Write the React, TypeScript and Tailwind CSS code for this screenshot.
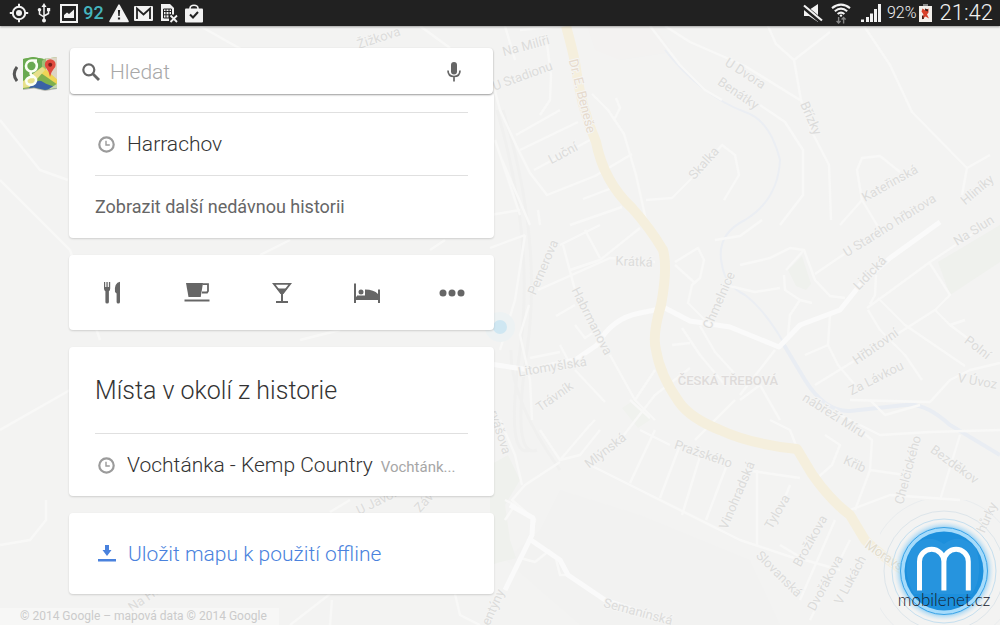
import React from "react";

type Label = { text: string; x: number; y: number; r: number; anchor?: "start" | "middle" | "end"; fill?: string; size?: number; weight?: number };

const labels: Label[] = [
  { text: "Na Milíři", x: 527, y: 50, r: -15 },
  { text: "U Stadionu", x: 524, y: 80, r: -20 },
  { text: "Dr. E. Beneše", x: 578, y: 97, r: 76, fill: "#e6dacd" },
  { text: "Luční", x: 565, y: 157, r: -28 },
  { text: "Skalka", x: 707, y: 166, r: -48 },
  { text: "U Dvora", x: 743, y: 77, r: 33 },
  { text: "Benátky", x: 736, y: 97, r: 34 },
  { text: "Břízky", x: 807, y: 120, r: 66 },
  { text: "Kateřinská", x: 892, y: 187, r: -29 },
  { text: "U Starého hřbitova", x: 892, y: 229, r: -32 },
  { text: "Hliníky", x: 980, y: 193, r: -40 },
  { text: "Na Slun", x: 957, y: 246, r: -32, anchor: "start" },
  { text: "Pernerova", x: 547, y: 269, r: -67 },
  { text: "Krátká", x: 634, y: 266, r: 2 },
  { text: "Habrmanova", x: 588, y: 323, r: 63 },
  { text: "Litomyšlská", x: 553, y: 371, r: -9 },
  { text: "Trávník", x: 557, y: 400, r: -35 },
  { text: "ČESKÁ TŘEBOVÁ", x: 728, y: 385, r: 0, weight: 500, fill: "#dedbda" },
  { text: "Chmelnice", x: 723, y: 302, r: -66 },
  { text: "Lidická", x: 873, y: 276, r: -46 },
  { text: "Hřbitovní", x: 878, y: 350, r: -35 },
  { text: "Za Lávkou", x: 878, y: 382, r: -27 },
  { text: "Polní", x: 975, y: 351, r: 38 },
  { text: "V Úvoz", x: 957, y: 382, r: 10, anchor: "start" },
  { text: "nábřeží Míru", x: 832, y: 419, r: 32 },
  { text: "Mlýnská", x: 608, y: 454, r: -38 },
  { text: "Pražského", x: 702, y: 458, r: 19 },
  { text: "Vinohradská", x: 741, y: 497, r: -67 },
  { text: "Tylova", x: 781, y: 514, r: -60 },
  { text: "Brožíkova", x: 814, y: 543, r: -61 },
  { text: "Slovanská", x: 776, y: 577, r: 45 },
  { text: "Dvořákova", x: 829, y: 585, r: -62 },
  { text: "V Lukách", x: 854, y: 582, r: -62 },
  { text: "Křib", x: 853, y: 468, r: 24 },
  { text: "Chelčického", x: 912, y: 471, r: -75 },
  { text: "Bezděkov", x: 952, y: 468, r: 36 },
  { text: "Moravská", x: 864, y: 547, r: 34, anchor: "start", fill: "#e2dccb" },
  { text: "hůrky", x: 991, y: 519, r: -66 },
  { text: "Semanínská", x: 637, y: 616, r: 15 },
  { text: "rvášova", x: 503, y: 455, r: 72, anchor: "end" },
  { text: "entýny", x: 497, y: 609, r: -66 },
  { text: "Na Horách", x: 132, y: 612, r: -34, anchor: "start" },
  { text: "U Javorky", x: 359, y: 515, r: -26, anchor: "start" },
  { text: "Závodu", x: 420, y: 513, r: -48, anchor: "start" },
  { text: "Žižkova", x: 380, y: 42, r: -18 },
];

const streets = [
  "M490 72 L500 110 L516 145 L530 173 L547 195 L595 176 L632 154",
  "M547 44 L551 75 L550 100 L540 115",
  "M516 135 L560 110 M520 150 L578 122 M534 170 L590 140 M583 199 L612 188 M570 225 L622 207",
  "M592 94 L608 110 L624 134 L636 175 L646 220 M614 120 L620 108 L616 98",
  "M646 200 L672 198 L700 170 L722 145 L735 155 L739 175 L724 200",
  "M650 26 L680 65 L705 90 L722 100",
  "M665 26 L690 42 L745 66 L800 100",
  "M768 26 L776 44 L794 60 L830 32 M794 60 L801 100 L811 130 L829 165 L831 220",
  "M760 105 L785 122 L803 150 L803 195 L780 225",
  "M864 26 L890 65 L912 112 L967 168 L962 195 M967 168 L990 155",
  "M862 200 L857 170 L862 158 L880 156 L900 172 M840 225 L862 200 L880 230",
  "M560 245 L600 225 M570 270 L600 260 L640 228 M585 230 L600 258",
  "M538 290 L610 258 L655 262 M563 245 L575 290 M490 248 L525 235",
  "M525 235 L515 300 L500 350 M529 305 L520 335 L530 380 L532 420",
  "M556 316 L575 305 M575 325 L585 338 L600 328 M530 358 L560 352",
  "M610 355 L635 400 L655 420 M575 370 L605 402 M635 400 L655 370 M560 345 L568 360",
  "M675 262 L698 248 L704 260 L700 278 L692 285 L688 303 L710 325 M675 265 L695 283",
  "M672 345 L690 343 M682 328 L700 355 L725 385 M700 326 L715 352 L735 374",
  "M715 240 L740 236 L762 220 M725 285 L755 292 L780 288",
  "M740 265 L770 258 L790 248 L804 250 L815 280 L830 296 L845 298",
  "M784 275 L785 290 L800 300 L812 303 M804 250 L786 270 M800 300 L790 315 L788 335",
  "M815 274 L850 250 M870 304 L875 295 L876 275 M867 308 L885 295 L930 262 L975 232",
  "M929 262 L950 295 L935 310 L880 345 L815 385 M878 298 L905 325 L965 366",
  "M830 315 L828 345 L838 365 L855 385 M868 310 L880 330 L905 355 L922 380",
  "M805 355 L828 345 M935 310 L950 325 L970 340 M950 325 L965 320",
  "M850 400 L930 402 L950 380 L970 370 L1000 363",
  "M740 395 L775 350 M740 400 L760 385 L780 420 M695 440 L735 400",
  "M620 440 L655 395 L690 368 M630 400 L650 418",
  "M540 430 L560 460 L590 425 L595 420 M560 460 L580 455 L600 430",
  "M590 465 L640 490 L740 540 L800 560 M655 430 L630 483 M680 445 L660 498 M702 450 L682 515 M728 462 L706 520",
  "M640 430 L660 440 L670 445 M560 462 L525 485 L512 500 L535 520 L530 540 L505 590",
  "M500 420 L515 455 L522 485 M505 520 L515 505 L505 500",
  "M757 470 L757 545 M745 470 L800 478 M790 485 L780 510 M797 448 L790 430 L770 420",
  "M815 480 L832 465 L840 445 L825 435 M860 430 L872 440 L870 470 L855 510",
  "M850 510 L890 495 L960 500 M870 470 L905 475 M960 435 L940 500",
  "M780 545 L805 560 L840 570 M835 520 L800 600 M850 540 L810 620",
  "M555 555 L560 575 L570 575 M520 558 L535 562 L550 550",
  "M840 415 L880 435 L930 432 L1000 430 M870 400 L885 415 L920 405",
  "M46 500 L46 520 L30 540 L0 545 M100 340 L70 250 L0 180 M290 240 L260 255 M430 250 L445 240",
  "M330 512 L350 500 M330 594 L290 625 M332 600 L330 625 M455 594 L460 615 L480 625",
  "M200 26 L260 60 M420 26 L450 48 M0 120 L40 170 L68 180 M0 430 L70 390 M300 340 L340 330",
  "M560 26 L520 30 M505 26 L515 60 M495 140 L520 215 M490 215 L520 210 M502 160 L530 225 M538 210 L540 225",
];

function MapCanvas() {
  return (
    <svg className="absolute inset-0 h-full w-full" viewBox="0 0 1000 625" preserveAspectRatio="xMidYMid slice" aria-hidden="true">
      <rect width="1000" height="625" fill="#f3f3f2" />
      <path d="M587 26 L655 26 L672 52 L620 60 L595 50Z" fill="#f3f2f1" />
      <path d="M505 560 L540 530 L560 490 L640 515 L750 560 L780 625 L580 625Z" fill="#f2f2f1" />
      <path d="M938 262 L1000 225 L1000 262 L950 295Z" fill="#eff1ed" />
      <path d="M788 270 L802 256 L811 284 L806 290 L796 286Z" fill="#eff1ed" />
      <path d="M490 465 L508 455 L520 480 L505 505 L510 540 L516 558 L490 565Z" fill="#eff1ed" />
      <path d="M622 408 L634 400 L650 420 L638 428Z" fill="#f0f2ee" />
      <path d="M497 110 Q535 240 520 350 T530 450 M503 110 Q543 240 527 350 T537 450 M511 350 Q510 400 560 470" fill="none" stroke="#f0f0ef" strokeWidth="3" />
      <path d="M665 50 Q700 95 745 112 Q770 120 780 160 Q778 200 745 220 Q715 235 722 265 Q725 285 745 295 Q765 310 785 345" fill="none" stroke="#ebeef3" strokeWidth="2" />
      <path d="M784 345 L805 380 Q825 412 850 411 L905 405 Q925 402 950 425 L1000 455" fill="none" stroke="#e9edf3" strokeWidth="4" />
      {streets.map((d) => (
        <path key={d} d={d} fill="none" stroke="#f8f8f7" strokeWidth="2.4" strokeLinejoin="round" />
      ))}
      <path
        d="M490 364 L530 370 L575 360 L597 345 Q612 318 640 313 L665 308 L690 321 L730 327 L779 347 L800 325 L840 310 L860 285 L890 258 L940 222 M510 505 L533 518 L532 535 L505 590 M528 538 L560 560 L568 575 L605 600 L670 622"
        fill="none"
        stroke="#fafafa"
        strokeWidth="5"
        strokeLinejoin="round"
      />
      <path
        d="M566 26 Q572 48 575 62 Q580 105 596 142 Q604 182 632 208 Q650 228 663 250 Q668 268 661 305 Q652 335 656 350 Q660 375 679 402 Q690 418 720 430 Q750 444 797 449 L812 474 Q830 500 850 515 L865 540 Q880 555 910 575"
        fill="none"
        stroke="#f5efdd"
        strokeWidth="10"
        strokeLinejoin="round"
      />
      <circle cx="500" cy="327" r="15" fill="#edf2f3" />
      <circle cx="500" cy="327" r="7" fill="#cfe7f2" />
      {labels.map((l) => (
        <text
          key={l.text}
          x={l.x}
          y={l.y}
          transform={`rotate(${l.r} ${l.x} ${l.y})`}
          textAnchor={l.anchor ?? "middle"}
          fill={l.fill ?? "#dcdcdb"}
          stroke="#f5f5f4"
          strokeWidth="2"
          paintOrder="stroke"
          fontSize={l.size ?? 13}
          fontWeight={l.weight ?? 400}
        >
          {l.text}
        </text>
      ))}
    </svg>
  );
}

function IconSlot({ children }: { children: React.ReactNode }) {
  return <span className="flex w-[25px] justify-center">{children}</span>;
}

function StatusBar() {
  return (
    <header className="relative flex h-[26px] items-center bg-[#212121] pr-[7px] pl-1.5 text-[#f2f2f2] shadow-[0_1px_2px_rgba(0,0,0,0.35)]">
      <IconSlot>
        <svg width="20" height="20" viewBox="0 0 20 20" fill="none" stroke="currentColor" strokeWidth="2">
          <circle cx="10" cy="10" r="6.2" />
          <circle cx="10" cy="10" r="3" fill="currentColor" stroke="none" />
          <path d="M10 .8v3.4M10 15.8v3.4M.8 10h3.4M15.8 10h3.4" />
        </svg>
      </IconSlot>
      <IconSlot>
        <svg width="14" height="20" viewBox="0 0 14 20" fill="none" stroke="currentColor" strokeWidth="1.5">
          <path d="M7 3v14M7 14 L2.5 11V7M7 13 L11.5 10.5V7" />
          <path d="M7 0 L9.5 4h-5Z" fill="currentColor" stroke="none" />
          <circle cx="7" cy="17.4" r="2" fill="currentColor" stroke="none" />
          <circle cx="2.5" cy="6.8" r="1.8" fill="currentColor" stroke="none" />
          <rect x="10" y="5" width="3.2" height="3.2" fill="currentColor" stroke="none" />
        </svg>
      </IconSlot>
      <IconSlot>
        <svg width="18" height="19" viewBox="0 0 18 19">
          <rect x="1" y="1" width="16" height="17" fill="none" stroke="currentColor" strokeWidth="2" />
          <path d="M4 14v-3l3-2.5 2 1.5 5-4.5V14Z" fill="currentColor" />
        </svg>
      </IconSlot>
      <IconSlot>
        <span className="text-lg leading-5 font-medium text-[#45b4bd]">92</span>
      </IconSlot>
      <IconSlot>
        <svg width="20" height="19" viewBox="0 0 20 19">
          <path d="M10 1.2 L19 17.5H1Z" fill="currentColor" stroke="currentColor" strokeWidth="1.6" strokeLinejoin="round" />
          <path d="M8.9 6h2.2l-.4 6h-1.4ZM8.9 13.4h2.2v2.2H8.9Z" fill="#212121" />
        </svg>
      </IconSlot>
      <IconSlot>
        <svg width="19" height="15" viewBox="0 0 19 15">
          <rect width="19" height="15" rx="1" fill="currentColor" />
          <path d="M3 13V2.5 L9.5 8.5 L16 2.5V13" fill="none" stroke="#212121" strokeWidth="1.8" />
        </svg>
      </IconSlot>
      <IconSlot>
        <svg width="18" height="20" viewBox="0 0 18 20">
          <path d="M1 1h9l4 4v8l-4 5H1Z" fill="currentColor" />
          <path d="M3.5 6h8v9h-8ZM3.5 8.5h8M3.5 11.8h8M6 6v9M9 6v9" fill="none" stroke="#212121" />
          <path d="M9 11.5h9V20H9Z" fill="#212121" />
          <path d="M10.5 12.5l6.5 6.5M17 12.5l-6.5 6.5" stroke="currentColor" strokeWidth="1.8" />
        </svg>
      </IconSlot>
      <IconSlot>
        <svg width="18" height="19" viewBox="0 0 18 19">
          <path d="M5 5.5 V4.2 Q5.3 1.3 9 1.3 T13 4.2 V5.5" fill="none" stroke="currentColor" strokeWidth="1.6" />
          <rect y="4.5" width="18" height="14" rx="1" fill="currentColor" />
          <path d="M5 10.5l3 3 5-5.5" fill="none" stroke="#212121" strokeWidth="2" />
        </svg>
      </IconSlot>

      <div className="ml-auto flex items-center">
        <svg className="mr-2" width="20" height="18" viewBox="0 0 20 18">
          <path d="M1 6h5l9-6v18l-9-6H1Z" fill="currentColor" />
          <path d="M0 2 L18 17" stroke="#212121" strokeWidth="5" />
          <path d="M1 1.5 L19 16.5" stroke="currentColor" strokeWidth="2.2" />
        </svg>
        <svg className="mr-2.5" width="20" height="21" viewBox="0 0 20 21" fill="none" stroke="currentColor" strokeWidth="2.1">
          <path d="M1 5.2Q10-1.8 19 5.2M3.8 8.2Q10 3.2 16.2 8.2M6.600 11Q10 8.200 13.400 11" />
          <circle cx="10" cy="12.6" r="1.2" fill="currentColor" stroke="none" />
          <path d="M7.600 14v6M5.600 18l2 2 2-2M12.600 20.500v-6M10.600 16.500l2-2 2 2" stroke="#858585" strokeWidth="1.4" />
        </svg>
        <svg className="mr-1.5" width="20" height="18" viewBox="0 0 20 18" fill="currentColor">
          <path d="M0 15.5h3V18H0ZM5 13h3v5H5ZM9 9.5h3V18H9ZM13 5h3v13h-3ZM17 0h3v18h-3Z" />
        </svg>
        <span className="mr-0.5 text-base leading-5 font-light">92%</span>
        <svg className="mr-2" width="13" height="18" viewBox="0 0 13 18">
          <path d="M4 0h5v2H4Z" fill="#8a8a8a" />
          <rect y="2" width="13" height="16" fill="#f3efeb" />
          <path d="M3.5 4.5l3 2 3-2v4l-1.5 2 2 4-3.500-2-3.500 3 1.500-5-2-3Z" fill="#d9412b" />
          <path d="M6 4.500l3 1v2l-3-1ZM3 12l1-1 1 4H3Z" fill="#44201b" />
        </svg>
        <time className="text-[22px] leading-6 font-light">21:42</time>
      </div>
    </header>
  );
}

function MapsLogo() {
  return (
    <svg width="36" height="35" viewBox="0 0 36 35">
      <defs>
        <clipPath id="sheet">
          <path d="M1 3 L11 1 L22 3 L35 1 V32 L23 34 L12 31.5 L1 33Z" />
        </clipPath>
      </defs>
      <path d="M1 4 L11 2 L22 4 L35 2 V33 L23 35 L12 32.5 L1 34Z" fill="#b9b9b5" />
      <g clipPath="url(#sheet)">
        <rect width="36" height="35" fill="#7fb04d" />
        <path d="M11 0 L22 0 L19 14 L10 24 L0 24 L0 0Z" fill="#6aaa52" />
        <path d="M20 14 L23 0 L36 0 L36 25Z" fill="#ddd5c5" />
        <path d="M20 5 L24 1 L24 14 L20 14Z" fill="#9cc078" />
        <path d="M16 15 L21 11 L36 24 L36 29Z" fill="#eed556" />
        <path d="M0 26 L20 11 L23 14 L8 31 L0 32Z" fill="#e7e08a" />
        <path d="M7 32 Q15 22 21 26 T36 31 V35 H7Z" fill="#3a61a6" />
        <path d="M24 35 L36 27 V35Z" fill="#c9d9ae" />
      </g>
      <path d="M15 4.5 H9.5 A5.5 5.5 0 1 0 9.5 15.5 A5.5 5.5 0 0 0 12 5.200 M9.500 15.500 Q7 18 11 20 Q16 23 13 27 Q9 30.500 5 27.500 Q2.500 23 8 21 L12 20.800" fill="none" stroke="#fbfff5" strokeWidth="2.6" />
      <path d="M28 21 Q27.500 16 24.500 12.500 A5.400 5.400 0 1 1 32 12.500 Q28.800 16 28 21Z" fill="#e04b3e" />
      <circle cx="28.2" cy="8.7" r="2" fill="#791f1a" />
    </svg>
  );
}

function Clock() {
  return (
    <svg className="shrink-0" width="17" height="17" viewBox="0 0 17 17" fill="none" stroke="#9b9b9b">
      <circle cx="8.5" cy="8.5" r="7.2" strokeWidth="2.2" />
      <path d="M8 4.8V9h3.8" strokeWidth="1.4" />
    </svg>
  );
}

const categories = [
  {
    name: "Restaurace",
    icon: (
      <svg width="18" height="23" viewBox="0 0 18 23" fill="#666">
        <path d="M1 1h1.2v5h1.2V1h1.3v5h1.2V1H7.2v6.5Q7.2 9.5 5.9 10.3V21q0 1.5-1.8 1.5T2.4 21V10.3Q1 9.500 1 7.500ZM17 .8V21q0 1.500-1.700 1.500T13.600 21V12.500L12 11Q11 2 17 .8Z" />
      </svg>
    ),
  },
  {
    name: "Kavárny",
    icon: (
      <svg width="26" height="21" viewBox="0 0 26 21">
        <path d="M2 1h17l-2.300 14H4.500Z" fill="#666" />
        <path d="M18.500 2.200H24V9l-1 1.500h-5" fill="none" stroke="#666" strokeWidth="1.800" />
        <path d="M.5 17.500H25.500v2H.5Z" fill="#666" />
      </svg>
    ),
  },
  {
    name: "Bary",
    icon: (
      <svg width="20" height="22" viewBox="0 0 20 22">
        <path d="M1.800 1.900H18.200L11 11H9Z" fill="none" stroke="#666" strokeWidth="1.800" />
        <path d="M4.500 6.500h11L11 12V19h5v2H4v-2h5v-7Z" fill="#666" />
      </svg>
    ),
  },
  {
    name: "Hotely",
    icon: (
      <svg width="28" height="22" viewBox="0 0 28 22" fill="#666">
        <path d="M1 1.500h2v13h22V7.500h2V21h-2v-3H3v3H1Z" />
        <circle cx="8" cy="10" r="2.500" />
        <path d="M12 7.500Q21 7.500 25 12v3H4v-1.500h8Z" />
      </svg>
    ),
  },
  {
    name: "Další",
    icon: (
      <svg width="26" height="8" viewBox="0 0 26 8" fill="#666">
        <circle cx="4" cy="4" r="3.500" />
        <circle cx="13" cy="4" r="3.500" />
        <circle cx="22" cy="4" r="3.500" />
      </svg>
    ),
  },
];

function Card({ className = "", children }: { className?: string; children: React.ReactNode }) {
  return <section className={`rounded-sm bg-white shadow-[0_1px_2px_rgba(0,0,0,0.15)] ${className}`}>{children}</section>;
}

function WatermarkLogo() {
  return (
    <svg className="absolute right-0 bottom-0" width="120" height="125" viewBox="880 500 120 125" aria-hidden="true">
      <defs>
        <radialGradient id="halo">
          <stop offset="0.84" stopColor="#56b7f2" stopOpacity="0.75" />
          <stop offset="1" stopColor="#b6dff8" stopOpacity="0" />
        </radialGradient>
      </defs>
      <g fill="none">
        <circle cx="944" cy="571" r="74" stroke="#e9ecee" />
        <circle cx="944" cy="571" r="60" stroke="#dde5ea" />
        <circle cx="944" cy="571" r="52" stroke="#c5dfef" />
      </g>
      <circle cx="944" cy="571" r="50" fill="url(#halo)" />
      <circle cx="944" cy="571" r="44" fill="#a5dbfb" />
      <circle cx="944" cy="571" r="43.500" fill="none" stroke="#3ba3e6" />
      <circle cx="944" cy="571" r="39.500" fill="#1c8fdc" />
      <path d="M912 548 Q926 532 944 544 Q960 532 976 548 Q984 575 972 594 H914 Q900 570 912 548Z" fill="#3a9fe2" opacity="0.35" />
      <path d="M919.500 590.500V561.500A12.200 12.200 0 0 1 943.900 561.500V590.500M943.900 561.500A12.200 12.200 0 0 1 968.300 561.500V590.500" fill="none" stroke="#fff" strokeWidth="5" />
      <text x="944" y="606" textAnchor="middle" fontFamily="Lato, sans-serif" fontWeight="300" fontSize="17" fill="#16202a">
        mobilenet.cz
      </text>
    </svg>
  );
}

export default function App() {
  return (
    <div className="relative flex min-h-screen flex-col overflow-hidden bg-[#f3f3f2] font-[Roboto,sans-serif]">
      <MapCanvas />
      <StatusBar />

      <main className="relative flex flex-1 items-start pt-[22px]">
        <button type="button" aria-label="Zpět" className="flex w-[69px] shrink-0 items-center gap-1 pt-2 pl-[11px]">
          <svg width="7" height="16" viewBox="0 0 7 16" fill="none" stroke="#555" strokeWidth="3">
            <path d="M6 1 Q.5 8 6 15" />
          </svg>
          <MapsLogo />
        </button>

        <div className="min-w-0 max-w-[425px] flex-1">
          <form className="relative z-10 mx-px flex h-[46px] items-center rounded-sm bg-white pt-0.5 pr-8 pl-3 shadow-[0_1px_2px_rgba(0,0,0,0.4)]" onSubmit={(e) => e.preventDefault()}>
            <svg className="shrink-0" width="18" height="18" viewBox="0 0 18 18" fill="none" stroke="#666">
              <circle cx="6.800" cy="6.800" r="5.500" strokeWidth="2.200" />
              <path d="M10.800 10.800 L17 17" strokeWidth="2.800" />
            </svg>
            <input type="text" aria-label="Hledat" placeholder="Hledat" className="ml-2.5 min-w-0 flex-1 bg-transparent text-[21px] leading-7 font-light text-[#444] outline-none placeholder:text-[#a8a8a8]" />
            <button type="button" aria-label="Hlasové vyhledávání" className="shrink-0">
              <svg width="14" height="20" viewBox="0 0 14 20">
                <rect x="4" y="0" width="6" height="12.500" rx="3" fill="#666" />
                <path d="M1 8.500Q1 14.500 7 14.500T13 8.500M7 14.500V19.500" fill="none" stroke="#666" strokeWidth="1.700" />
              </svg>
            </button>
          </form>

          <Card className="-mt-0.5 px-[26px] pt-5">
            <button type="button" className="flex h-[63px] w-full items-center gap-3 border-t border-[#e0e0e0] pl-[3px] text-left">
              <Clock />
              <span className="text-[21px] leading-7 font-light text-[#333]">Harrachov</span>
            </button>
            <button type="button" className="block h-[63px] w-full border-t border-[#e0e0e0] text-left text-lg text-[#666]">
              Zobrazit další nedávnou historii
            </button>
          </Card>

          <Card className="mt-[17px] grid h-[75px] grid-cols-5">
            {categories.map((c) => (
              <button key={c.name} type="button" aria-label={c.name} className="flex items-center justify-center">
                {c.icon}
              </button>
            ))}
          </Card>

          <Card className="mt-[17px] px-[26px]">
            <h2 className="flex h-[86px] items-center pt-0.5 text-[25px] leading-8 font-light text-[#333]">Místa v okolí z historie</h2>
            <button type="button" className="flex h-[63px] w-full items-center border-t border-[#e0e0e0] pl-[3px] text-left whitespace-nowrap">
              <Clock />
              <span className="flex items-baseline gap-2 pl-3">
                <span className="text-[21px] leading-7 font-light text-[#333]">Vochtánka - Kemp Country</span>
                <span className="text-[15px] text-[#a6a6a6]">Vochtánk...</span>
              </span>
            </button>
          </Card>

          <Card className="mt-[17px] px-[26px]">
            <button type="button" className="flex h-[81px] w-full items-center gap-3 pl-[3px] text-left">
              <svg className="shrink-0" width="18" height="18" viewBox="0 0 18 18" fill="#4a82dd">
                <path d="M7 0h4v5h2.500L9 11 4.500 5H7ZM0 14h18v2.500H0Z" />
              </svg>
              <span className="text-[21px] leading-7 font-light text-[#4a82dd]">Uložit mapu k použití offline</span>
            </button>
          </Card>
        </div>
      </main>

      <footer className="relative flex h-[17px] items-center">
        <small className="bg-white/35 pr-3 pl-5 text-xs leading-[17px] text-[#cbcbcb]">© 2014 Google – mapová data © 2014 Google</small>
      </footer>
      <WatermarkLogo />
    </div>
  );
}
